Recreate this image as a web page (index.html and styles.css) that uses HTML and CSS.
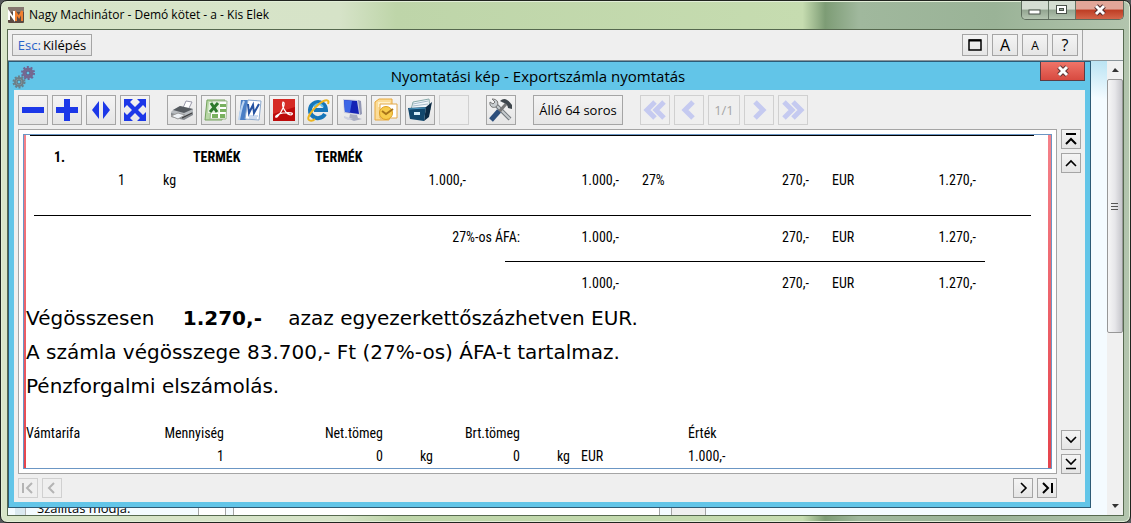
FILE: index.html
```html
<!DOCTYPE html>
<html lang="hu">
<head>
    <meta charset="UTF-8">
    <meta name="viewport" content="width=device-width, initial-scale=1.0">
    <title>Nagy Machinátor</title>
    <link rel="stylesheet" href="styles.css">
</head>
<body>

    <div class="window">
        <header class="titlebar">
            <svg class="app-icon" width="16" height="16" viewBox="0 0 16 16">
                <rect width="16" height="16" rx="1" fill="#5b4a42"/>
                <path d="M0 0h16v5H0z" fill="#85776f"/>
                <path d="M1 13V5l5 7V4" fill="none" stroke="#fff" stroke-width="2"/>
                <path d="M8 14V6l3 4 3-6v10" fill="none" stroke="#f08030" stroke-width="2"/>
            </svg>
            <h1 class="window-title">Nagy Machinátor - Demó kötet - a - Kis Elek</h1>
            <div class="window-buttons">
                <button class="win-btn" aria-label="Kis méret">
                    <svg width="14" height="12" viewBox="0 0 14 12"><rect x="1" y="6" width="11" height="4" fill="#fff" stroke="#4b524b"/></svg>
                </button>
                <button class="win-btn" aria-label="Teljes méret">
                    <svg width="14" height="12" viewBox="0 0 14 12"><rect x="1.500" y="1.500" width="10" height="8" fill="#fff" stroke="#4b524b"/><rect x="4.500" y="4.500" width="4" height="2" fill="#93a293" stroke="#4b524b"/></svg>
                </button>
                <button class="win-btn win-close" aria-label="Bezárás">
                    <svg width="14" height="12" viewBox="0 0 14 12"><path d="M3 2l8 8M11 2l-8 8" stroke="#4d2a2a" stroke-width="5"/><path d="M3 2l8 8M11 2l-8 8" stroke="#fff" stroke-width="3"/></svg>
                </button>
            </div>
        </header>

        <div class="client">
            <nav class="menubar">
                <button class="btn esc-btn"><span class="key">Esc:</span> Kilépés</button>
                <div class="menubar-right">
                    <button class="btn menu-btn" aria-label="Ablak"><svg width="14" height="12" viewBox="0 0 14 12"><path d="M1 1h12v10H1z" fill="none" stroke="#000" stroke-width="1.500"/><path d="M1 1.500h12" stroke="#000" stroke-width="2"/></svg></button>
                    <button class="btn menu-btn font-big">A</button>
                    <button class="btn menu-btn font-small">A</button>
                    <button class="btn menu-btn font-big">?</button>
                </div>
            </nav>

            <div class="workspace">
                <div class="desk">
                    <section class="dialog">
                        <div class="dialog-title">
                            <svg class="gears" width="24" height="24" viewBox="0 0 24 24">
                                <circle cx="16" cy="8" r="6" fill="none" stroke="#6d6596" stroke-width="2" stroke-dasharray="2 1.770"/>
                                <circle cx="16" cy="8" r="4" fill="#8a80ad" stroke="#75688f" stroke-width="3"/>
                                <circle cx="16" cy="8" r="2" fill="#62c5e8" stroke="#5c5680"/>
                                <circle cx="7" cy="17" r="5.500" fill="none" stroke="#68808c" stroke-width="2" stroke-dasharray="2 1.460"/>
                                <circle cx="7" cy="17" r="4" fill="#8e9ca2" stroke="#6d7f87" stroke-width="2"/>
                                <circle cx="7" cy="17" r="2" fill="#62c5e8" stroke="#56707c"/>
                            </svg>
                            <h2>Nyomtatási kép - Exportszámla nyomtatás</h2>
                            <button class="dialog-close" aria-label="Bezárás">
                                <svg width="14" height="12" viewBox="0 0 14 12"><path d="M3 2l8 8M11 2l-8 8" stroke="#5d3434" stroke-width="5"/><path d="M3 2l8 8M11 2l-8 8" stroke="#fff" stroke-width="3"/></svg>
                            </button>
                        </div>

                        <div class="panel">
                            <div class="toolbar">
                                <div class="group">
                                    <button class="btn tool" aria-label="Kicsinyítés"><svg width="24" height="24" viewBox="0 0 24 24"><path d="M1 9h22v6H1z" fill="#1c38e8"/></svg></button>
                                    <button class="btn tool" aria-label="Nagyítás"><svg width="24" height="24" viewBox="0 0 24 24"><path d="M9 1h6v8h8v6h-8v8H9v-8H1V9h8z" fill="#1c38e8"/></svg></button>
                                    <button class="btn tool" aria-label="Szélesség"><svg width="24" height="24" viewBox="0 0 24 24"><path d="M10 3v18L3 12zM14 3v18l7-9z" fill="#1c38e8"/></svg></button>
                                    <button class="btn tool" aria-label="Teljes oldal"><svg width="24" height="24" viewBox="0 0 24 24"><path d="M1 1h9L7 4l5 5 5-5-3-3h9v9l-3-3-5 5 5 5 3-3v9h-9l3-3-5-5-5 5 3 3H1v-9l3 3 5-5-5-5-3 3z" fill="#1c38e8"/></svg></button>
                                </div>
                                <div class="group">
                                    <button class="btn tool" aria-label="Nyomtatás"><svg width="24" height="24" viewBox="0 0 24 24"><path d="M13 10l3-7 6 1-4 8z" fill="#fff" stroke="#99a"/><path d="M3 12l7-4 13 3v4l-10 5-12-3v-3z" fill="#b8bcc0"/><path d="M3 12l7-4 13 3-9 4z" fill="#565b60"/><path d="M1 15l13 3 9-4v3l-9 5-13-3z" fill="#85898e"/><path d="M1 18l7-3 7 2-7 4z" fill="#eef2f6" stroke="#999"/><path d="M12 20l10-5" stroke="#333"/></svg></button>
                                    <button class="btn tool" aria-label="Excel"><svg width="24" height="24" viewBox="0 0 24 24"><path d="M3 2h18l-3 20H1z" fill="#b7d7a5" stroke="#74a35d"/><path d="M8 3h15l-1 18H6z" fill="#fff" stroke="#9ab68c"/><path d="M16 6h6v3h-6zM16 11h6v3h-6zM8 16h6v4H8zM16 16h5v4h-5z" fill="#79b15f"/><path d="M5 4h11l-1 11H4z" fill="#e5f1de"/><path d="M7 5l6 9M14 5l-8 9" stroke="#2d7a2c" stroke-width="3"/></svg></button>
                                    <button class="btn tool" aria-label="Word"><svg width="24" height="24" viewBox="0 0 24 24"><path d="M3 2h16L8 22H1z" fill="#4a7fc6"/><path d="M6 3C3 10 2 17 1 22" stroke="#bcd5f2" stroke-width="2" fill="none"/><path d="M10 2l13 1-2 19-14-1z" fill="#fff" stroke="#8ba9cf"/><path d="M10 18h10M11 20h8" stroke="#9ab8e0"/><path d="M10 6l1 9 4-8 1 8 5-9" fill="none" stroke="#2452a2" stroke-width="2"/></svg></button>
                                    <button class="btn tool" aria-label="PDF"><svg width="24" height="24" viewBox="0 0 24 24"><rect x="1" y="1" width="22" height="22" fill="#bd0b0b"/><path d="M1 1h22v8L1 16z" fill="#d62b25"/><path d="M11 4c3 0 0 9-6 15-3 1-1-3 6-4s12 0 8 2c-4 0-10-8-8-13z" fill="none" stroke="#fff" stroke-width="1.200"/></svg></button>
                                    <button class="btn tool" aria-label="Böngésző"><svg width="24" height="24" viewBox="0 0 24 24"><path d="M19 16a8 8 0 1 1 1-4H8" fill="none" stroke="#1676b9" stroke-width="4"/><path d="M8 9c2-4 7-4 9 0" fill="none" stroke="#5fc0ea" stroke-width="2"/><path d="M22 6c2-5-3-5-9 0S0 20 3 22s6-1 6-1" fill="none" stroke="#edb51f" stroke-width="2"/></svg></button>
                                    <button class="btn tool" aria-label="Képernyő"><svg width="24" height="24" viewBox="0 0 24 24"><path d="M10 16l7 1 1 3 4 1-8 2-5-2z" fill="#a8acc0"/><path d="M3 1l15 1 2 15L4 15z" fill="#c9cde0"/><path d="M4 2l13 1 2 13L5 14z" fill="#1422b5"/><path d="M4 2l8 1-2 11-5 0z" fill="#3c66e6"/><path d="M18 2l3 1 1 13-2 1z" fill="#9297b4"/><path d="M4 18l9 3-5 1-4-2z" fill="#cdd0de"/></svg></button>
                                    <button class="btn tool" aria-label="E-mail"><svg width="24" height="24" viewBox="0 0 24 24"><path d="M1 4l4-3h13v6l-3 15H1z" fill="#fbdc98" stroke="#e8a83c"/><path d="M4 4h12v5H4z" fill="#fff1c9"/><path d="M6 6h17v14H6z" fill="#fff" stroke="#e2a94a"/><circle cx="12" cy="15" r="6.500" fill="#f8cc4c" stroke="#dc9f22"/><path d="M8 13l4 3 7-5" fill="none" stroke="#a8741a" stroke-width="2"/></svg></button>
                                    <button class="btn tool" aria-label="Archívum"><svg width="24" height="24" viewBox="0 0 24 24"><path d="M5 4l16-3 1 11H3z" fill="#f0f6fa" stroke="#8aa"/><path d="M5 6l15-3M5 8l15-2" stroke="#a7bdca"/><path d="M18 9l6-5-3 15-5 4z" fill="#0b2a44"/><path d="M0 10l18-1-2 14-14-2z" fill="#12476c"/><path d="M1 11l16-1" stroke="#4f9cc4"/><path d="M6 14h6v3H6z" fill="#d5ecf7"/></svg></button>
                                    <button class="btn tool" disabled aria-label="Üres"></button>
                                </div>
                                <div class="group">
                                    <button class="btn tool" aria-label="Beállítások"><svg width="24" height="24" viewBox="0 0 24 24"><path d="M7 7l14 14" stroke="#70767b" stroke-width="4"/><path d="M7 7l14 14" stroke="#c5cacd" stroke-width="2"/><path d="M3 1l3 3-2 2-3-2c-1 5 4 7 7 4 2-4 0-7-5-7z" fill="#c8cdd0" stroke="#777"/><path d="M17 6L9 15" stroke="#777" stroke-width="3"/><path d="M10 13l-8 9" stroke="#2b4d7a" stroke-width="5"/><path d="M11 3c4-4 8-2 12 4v4l-4-1c0-4-4-5-8-7z" fill="#3f464c"/></svg></button>
                                </div>
                                <button class="btn lines-btn">Álló 64 soros</button>
                                <div class="group">
                                    <button class="btn tool" disabled aria-label="Első oldal"><svg width="24" height="24" viewBox="0 0 24 24"><path d="M12 4l-8 8 8 8M21 4l-8 8 8 8" fill="none" stroke="#c5caf0" stroke-width="5"/></svg></button>
                                    <button class="btn tool" disabled aria-label="Előző oldal"><svg width="24" height="24" viewBox="0 0 24 24"><path d="M16 4l-8 8 8 8" fill="none" stroke="#c5caf0" stroke-width="5"/></svg></button>
                                    <button class="btn tool page-no" disabled>1/1</button>
                                    <button class="btn tool" disabled aria-label="Következő oldal"><svg width="24" height="24" viewBox="0 0 24 24"><path d="M8 4l8 8-8 8" fill="none" stroke="#c5caf0" stroke-width="5"/></svg></button>
                                    <button class="btn tool" disabled aria-label="Utolsó oldal"><svg width="24" height="24" viewBox="0 0 24 24"><path d="M3 4l8 8-8 8M12 4l8 8-8 8" fill="none" stroke="#c5caf0" stroke-width="5"/></svg></button>
                                </div>
                            </div>

                            <div class="preview">
                                <div class="paper">
                                    <main class="page">
                                        <hr class="top-line">
                                        <table class="items">
                                            <colgroup>
                                                <col class="c-qty"><col class="c-unit"><col class="c-name"><col class="c-price"><col class="c-label"><col class="c-net"><col class="c-rate"><col class="c-vat"><col class="c-cur"><col class="c-gross"><col>
                                            </colgroup>
                                            <tr class="item-name">
                                                <th class="number">1.</th><th></th><th>TERMÉK</th><th>TERMÉK</th><th colspan="7"></th>
                                            </tr>
                                            <tr>
                                                <td class="num">1</td><td class="unit">kg</td><td></td><td class="num">1.000,-</td><td></td><td class="num">1.000,-</td><td class="rate">27%</td><td class="num">270,-</td><td class="rate">EUR</td><td class="num">1.270,-</td><td></td>
                                            </tr>
                                            <tr class="rule"><td colspan="11"><hr class="line-items"></td></tr>
                                            <tr>
                                                <td class="num" colspan="5">27%-os ÁFA:</td><td class="num">1.000,-</td><td></td><td class="num">270,-</td><td class="rate">EUR</td><td class="num">1.270,-</td><td></td>
                                            </tr>
                                            <tr class="rule"><td colspan="11"><hr class="line-total"></td></tr>
                                            <tr>
                                                <td colspan="5"></td><td class="num">1.000,-</td><td></td><td class="num">270,-</td><td class="rate">EUR</td><td class="num">1.270,-</td><td></td>
                                            </tr>
                                        </table>

                                        <div class="summary">
                                            <p>Végösszesen <b>1.270,-</b> azaz egyezerkettőszázhetven EUR.</p>
                                            <p>A számla végösszege 83.700,- Ft (27%-os) ÁFA-t tartalmaz.</p>
                                            <p>Pénzforgalmi elszámolás.</p>
                                        </div>

                                        <table class="customs">
                                            <colgroup>
                                                <col class="k-tariff"><col class="k-qty"><col class="k-net"><col class="k-unit"><col class="k-gross"><col class="k-unit2"><col class="k-cur"><col>
                                            </colgroup>
                                            <tr>
                                                <th>Vámtarifa</th><th class="num">Mennyiség</th><th class="num">Net.tömeg</th><th></th><th class="num">Brt.tömeg</th><th></th><th></th><th>Érték</th>
                                            </tr>
                                            <tr>
                                                <td></td><td class="num">1</td><td class="num">0</td><td class="num">kg</td><td class="num">0</td><td class="num">kg</td><td class="cur">EUR</td><td>1.000,-</td>
                                            </tr>
                                        </table>
                                    </main>
                                </div>
                                <div class="scroll-v">
                                    <button class="btn nudge" aria-label="Legfelül"><svg width="14" height="14" viewBox="0 0 14 14"><path d="M2 2h10M2 12l5-5 5 5" fill="none" stroke="#000" stroke-width="2"/></svg></button>
                                    <button class="btn nudge" aria-label="Fel"><svg width="14" height="14" viewBox="0 0 14 14"><path d="M2 10l5-5 5 5" fill="none" stroke="#000" stroke-width="1.600"/></svg></button>
                                    <button class="btn nudge push-down" aria-label="Le"><svg width="14" height="14" viewBox="0 0 14 14"><path d="M2 4l5 5 5-5" fill="none" stroke="#000" stroke-width="1.600"/></svg></button>
                                    <button class="btn nudge" aria-label="Legalul"><svg width="14" height="14" viewBox="0 0 14 14"><path d="M2 2l5 5 5-5M2 11.500h10" fill="none" stroke="#000" stroke-width="1.600"/></svg></button>
                                </div>
                            </div>

                            <div class="scroll-h">
                                <button class="btn nudge" disabled aria-label="Bal szélre"><svg width="14" height="14" viewBox="0 0 14 14"><path d="M2 2v10M11 2L6 7l5 5" fill="none" stroke="#b4b4b4" stroke-width="2"/></svg></button>
                                <button class="btn nudge" disabled aria-label="Balra"><svg width="14" height="14" viewBox="0 0 14 14"><path d="M9 2L4 7l5 5" fill="none" stroke="#b4b4b4" stroke-width="2"/></svg></button>
                                <button class="btn nudge push-right" aria-label="Jobbra"><svg width="14" height="14" viewBox="0 0 14 14"><path d="M5 2l5 5-5 5" fill="none" stroke="#000" stroke-width="1.600"/></svg></button>
                                <button class="btn nudge" aria-label="Jobb szélre"><svg width="14" height="14" viewBox="0 0 14 14"><path d="M3 2l5 5-5 5M12 2v10" fill="none" stroke="#000" stroke-width="2"/></svg></button>
                            </div>
                        </div>
                    </section>

                    <div class="form-behind">
                        <span class="edge"></span>
                        <label for="shipping">Szállítás módja:</label>
                        <input id="shipping" class="code-field" type="text">
                        <input class="name-field" type="text" aria-label="Megnevezés">
                        <span class="form-end"></span>
                    </div>
                </div>

                <div class="scrollbar">
                    <svg width="16" height="18" viewBox="0 0 16 18"><path d="M5 11l3-4 4 4z" fill="#333"/></svg>
                    <div class="thumb"><svg width="8" height="9" viewBox="0 0 8 9"><path d="M0 1.500h7M0 4.500h7M0 7.500h7" stroke="#555"/></svg></div>
                    <svg class="arrow-down" width="16" height="18" viewBox="0 0 16 18"><path d="M5 7h7l-4 4z" fill="#333"/></svg>
                </div>
            </div>
        </div>
    </div>

</body>
</html>
```
FILE: styles.css
```css
* {
    box-sizing: border-box;
}
body {
    margin: 0;
    height: 100vh;
    background-color: #55585a;
    color: #000;
    font-family: "Open Sans", "Noto Sans", sans-serif;
    font-size: 12px;
}
h1, h2, p {
    margin: 0;
    font-weight: normal;
}
svg {
    display: block;
    flex: none;
}

/* Ablakkeret */
.window {
    display: flex;
    flex-direction: column;
    height: 100%;
    padding: 0 6px 6px;
    border: 1px solid #20241f;
    border-radius: 7px;
    background: linear-gradient(90deg, #d8e5c8 0%, #d6e3c8 30%, #bed5a9 35%, #c6dcb0 71%, #7d9c75 73%, #a0b89d 76%, #9ab397 88%, #b3c5ae 100%);
    box-shadow: inset 0 0 0 1px #e2eed8;
}
.titlebar {
    display: flex;
    height: 28px;
    flex: none;
    gap: 5px;
}
.app-icon {
    margin: 6px 0 0 1px;
}
.window-title {
    flex: 1;
    font-size: 12px;
    line-height: 28px;
}
.window-buttons {
    display: flex;
    height: 19px;
    border: 1px solid #5d6b5c;
    border-top: 0;
    border-radius: 0 0 5px 5px;
    overflow: hidden;
}
.win-btn {
    display: flex;
    width: 27px;
    padding: 0;
    align-items: center;
    justify-content: center;
    border: 0;
    border-right: 1px solid #657464;
    background: linear-gradient(#d5ddd2 45%, #93a591 50%, #b4c4b0);
}
.win-close {
    width: 47px;
    border-right: 0;
    background: linear-gradient(#e2a698 45%, #bd3d24 50%, #d4664a);
}
.client {
    display: flex;
    flex-direction: column;
    flex: 1;
    min-height: 0;
    border: 1px solid #56694f;
    background-color: #f4faff;
}

/* Gombok */
.btn {
    display: flex;
    padding: 0;
    align-items: center;
    justify-content: center;
    border: 1px solid #a5a5a5;
    background: linear-gradient(#f4f4f4, #e5e5e5);
    color: #000;
    font-family: inherit;
    font-size: 13px;
}
.btn:disabled {
    border-color: #d0d0d0;
    background: #efefef;
    color: #a6a6a6;
}
.menubar {
    display: flex;
    height: 31px;
    flex: none;
    padding: 4px 0 0 4px;
    justify-content: space-between;
    border-bottom: 1px solid #8a9499;
    background-color: #efefef;
}
.esc-btn {
    width: 80px;
    height: 22px;
    gap: 2px;
}
.key {
    color: #2a62c8;
}
.menubar-right {
    display: flex;
    gap: 4px;
    margin: -4px 40px 0 0;
    padding: 4px 4px 0 0;
    border-right: 1px solid #a5a5a5;
}
.menu-btn {
    width: 26px;
    height: 22px;
}
.font-big {
    font-size: 16px;
}
.font-small {
    font-size: 12px;
}

/* Munkaterület */
.workspace {
    display: flex;
    flex: 1;
    min-height: 0;
}
.desk {
    display: flex;
    flex-direction: column;
    flex: 1;
    min-width: 0;
    padding-right: 16px;
    background: linear-gradient(10deg, #f4fbff 94%, #b9e3f3);
}
.dialog {
    display: flex;
    flex-direction: column;
    flex: 1;
    min-height: 0;
    padding: 0 5px 5px;
    border: 1px solid #2d5b76;
    background-color: #62c5e8;
}
.dialog-title {
    display: flex;
    height: 28px;
    flex: none;
}
.gears {
    margin-top: 3px;
    margin-left: -2px;
}
.dialog-title h2 {
    flex: 1;
    font-size: 15px;
    line-height: 29px;
    text-align: center;
}
.dialog-close {
    display: flex;
    width: 45px;
    height: 19px;
    padding: 0;
    align-items: center;
    justify-content: center;
    border: 1px solid #5b3d45;
    border-top: 0;
    background: linear-gradient(#ef7468, #d74a40);
}
.panel {
    display: flex;
    flex-direction: column;
    flex: 1;
    min-height: 0;
    gap: 4px;
    padding: 5px 4px 4px;
    background-color: #efefef;
}
.toolbar {
    display: flex;
    gap: 17px;
}
.group {
    display: flex;
    gap: 4px;
}
.tool {
    width: 30px;
    height: 30px;
}
.page-no {
    width: 32px;
}
.lines-btn {
    width: 90px;
    height: 30px;
}

/* Nyomtatási kép */
.preview {
    display: flex;
    flex: 1;
    min-height: 0;
    gap: 4px;
}
.paper {
    display: flex;
    flex: 1;
    min-width: 0;
    padding: 4px;
    border: 1px solid #a5a5a5;
    background-color: #fff;
}
.page {
    flex: 1;
    min-width: 0;
    padding: 0 3px 0 2px;
    overflow: hidden;
    border: 1px solid #6b96c4;
    background: linear-gradient(#f5828a, #e6444c) left / 2px 100% no-repeat, linear-gradient(#f5828a, #e6444c) right / 3px 100% no-repeat;
    font-family: "Roboto Condensed", Roboto, sans-serif;
    font-size: 14px;
}
hr {
    height: 1px;
    margin: 0;
    border: 0;
    background-color: #000;
}
.top-line {
    margin: 0 14px 10px 4px;
}
.page table {
    width: 100%;
    table-layout: fixed;
    border-collapse: collapse;
}
.page th, .page td {
    height: 23px;
    padding: 0;
    line-height: 23px;
    text-align: left;
    white-space: nowrap;
}
.page .num {
    text-align: right;
}
.c-qty { width: 99px; }
.c-unit { width: 68px; }
.c-name { width: 122px; }
.c-price { width: 151px; }
.c-label { width: 54px; }
.c-net { width: 99px; }
.c-rate { width: 70px; }
.c-vat { width: 120px; }
.c-cur { width: 60px; }
.c-gross { width: 107px; }
.items .number {
    padding-left: 28px;
}
.items .unit {
    padding-left: 38px;
}
.items .rate {
    padding-left: 23px;
}
.items .rule td {
    height: auto;
    padding: 12px 0 10px;
    line-height: 0;
}
.line-items {
    margin: 11px 17px 0 8px;
}
.line-total {
    margin: 0 63px 0 479px;
}
.summary {
    padding: 6px 0 19px;
    font-family: "DejaVu Sans", sans-serif;
    font-size: 20px;
    line-height: 34px;
}
.summary b {
    margin: 0 20px 0 22px;
}
.customs th {
    font-weight: normal;
}
.k-tariff { width: 90px; }
.k-qty { width: 108px; }
.k-net { width: 159px; }
.k-unit { width: 50px; }
.k-gross { width: 87px; }
.k-unit2 { width: 50px; }
.k-cur { width: 118px; }
.customs .cur {
    padding-left: 11px;
}

/* Léptető gombok */
.scroll-v {
    display: flex;
    flex-direction: column;
    gap: 4px;
}
.scroll-h {
    display: flex;
    gap: 4px;
    padding-right: 24px;
}
.nudge {
    width: 20px;
    height: 20px;
}
.push-down {
    margin-top: auto;
}
.push-right {
    margin-left: auto;
}

/* A párbeszédablak mögötti űrlap alja */
.form-behind {
    display: flex;
    height: 7px;
    flex: none;
    align-items: flex-end;
    overflow: hidden;
    padding-left: 7px;
}
.edge {
    width: 11px;
    height: 7px;
    border-right: 1px solid #b5b5b5;
    background-color: #dbe9f0;
}
.form-behind label {
    width: 172px;
    padding-left: 11px;
    font-size: 13px;
    line-height: 14px;
}
.form-behind input {
    height: 7px;
    padding: 0;
    border: solid #a5a5a5;
    border-width: 0 1px;
    background-color: #fff;
}
.code-field {
    width: 28px;
    margin-right: 7px;
}
.name-field {
    width: 427px;
}
.form-end {
    width: 35px;
    height: 7px;
    margin-left: 11px;
    border: solid #a5a5a5;
    border-width: 0 1px;
    background-color: #efefef;
}

/* Görgetősáv */
.scrollbar {
    display: flex;
    flex-direction: column;
    width: 16px;
    background-color: #f0f0f0;
}
.thumb {
    display: flex;
    height: 56%;
    align-items: center;
    justify-content: center;
    border: 1px solid #979797;
    border-radius: 2px;
    background: linear-gradient(90deg, #f6f6f6, #e6e6e9 50%, #c6c6cb);
}
.arrow-down {
    margin-top: auto;
}
```
